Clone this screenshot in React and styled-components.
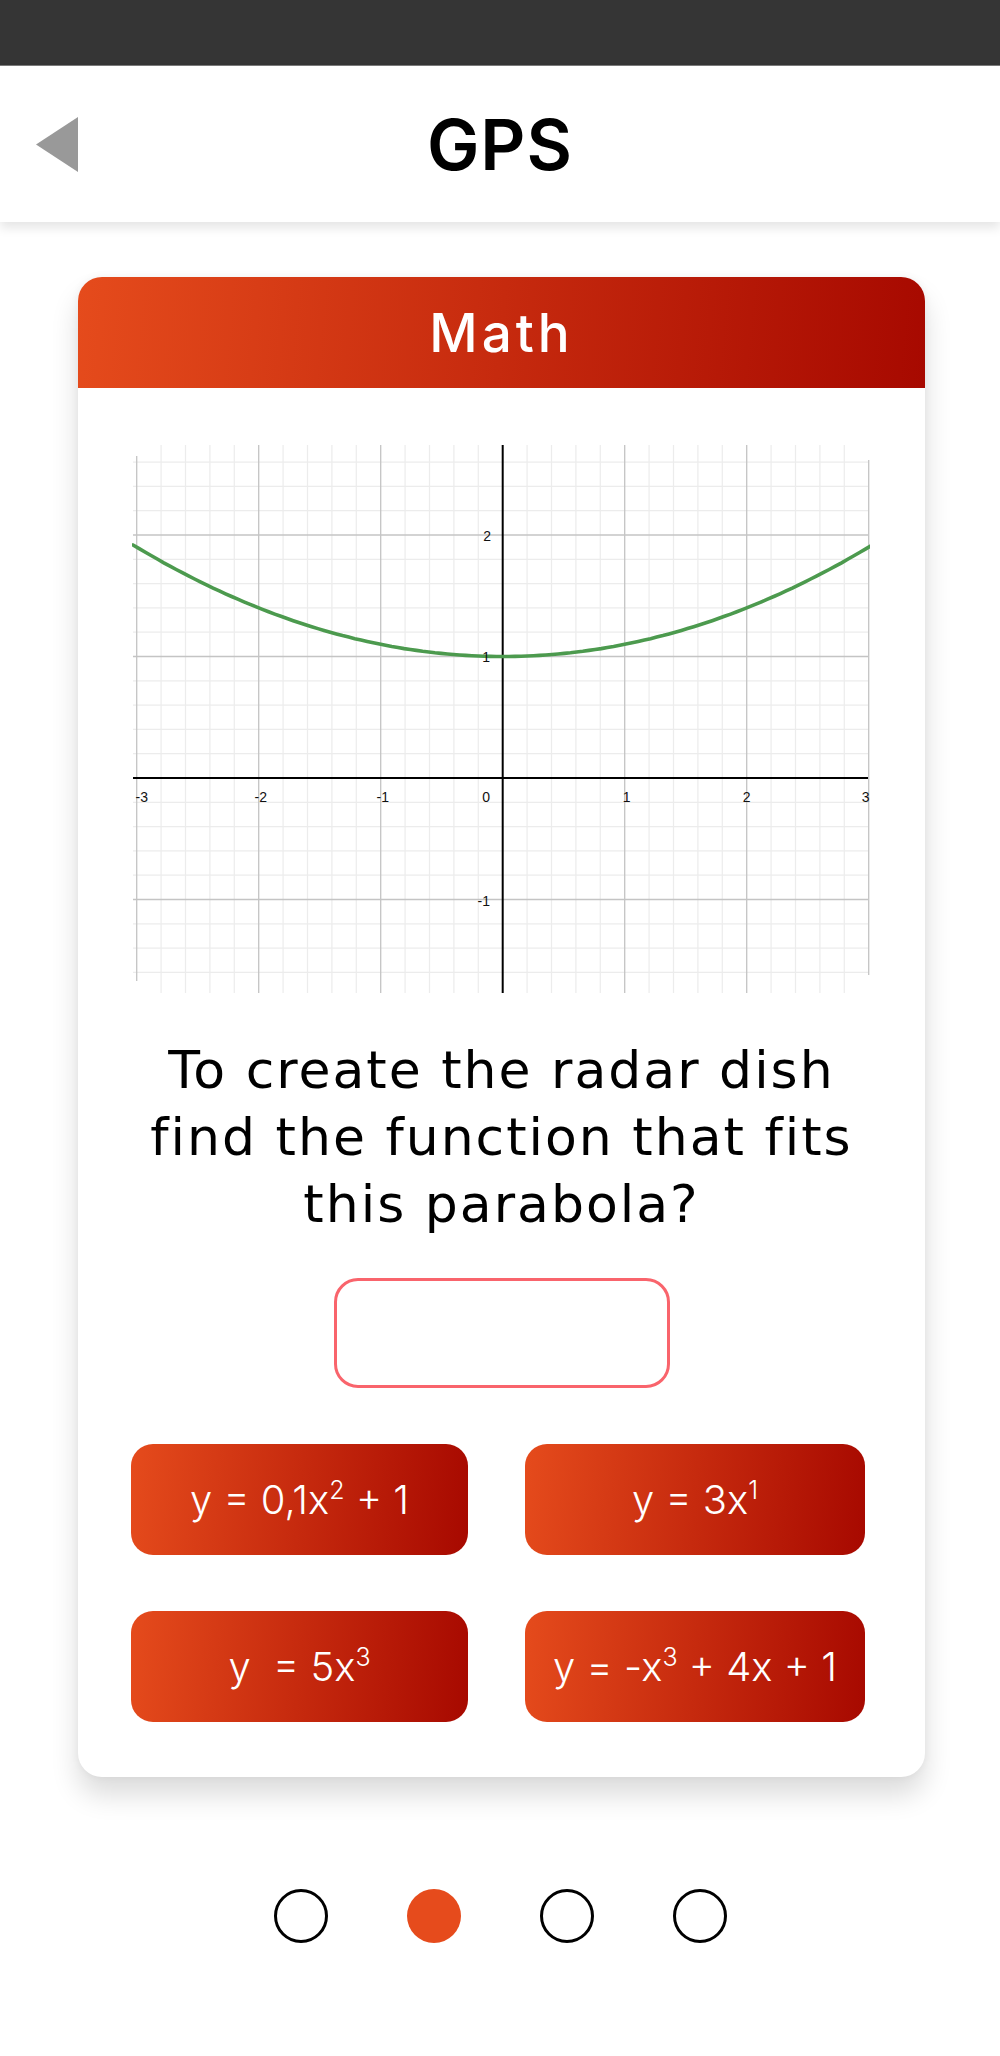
import React from "react";
import styled, { createGlobalStyle } from "styled-components";

const GlobalStyle = createGlobalStyle`
  body {
    margin: 0;
    background: #ffffff;
    font-family: "Inter", "DejaVu Sans", sans-serif;
  }
`;

const Page = styled.div`
  width: 1000px;
  min-height: 2056px;
  background: #ffffff;
`;

const StatusBar = styled.div`
  height: 65px;
  background: #353535;
  border-bottom: 1px solid #7a7a7a;
`;

const Header = styled.header`
  display: grid;
  grid-template-columns: 1fr auto 1fr;
  align-items: center;
  height: 156px;
  background: #ffffff;
  box-shadow: 0 6px 10px rgba(0, 0, 0, 0.1);
  position: relative;
`;

const BackButton = styled.button`
  justify-self: start;
  display: flex;
  align-items: center;
  margin-left: 36px;
  padding: 0;
  border: none;
  background: none;
  cursor: pointer;
`;

const Title = styled.h1`
  margin: 0;
  font-size: 70px;
  font-weight: 600;
  color: #000;
  letter-spacing: 1px;
`;

const Card = styled.section`
  width: 847px;
  margin: 55px 0 0 78px;
  background: #ffffff;
  border-radius: 24px;
  overflow: hidden;
  box-shadow: 0 18px 28px rgba(0, 0, 0, 0.14), 0 0 8px rgba(0, 0, 0, 0.05);
  padding-bottom: 55px;
`;

const gradient = "linear-gradient(95deg, #e54b1c 0%, #a70900 100%)";

const CardHeader = styled.div`
  height: 111px;
  display: flex;
  align-items: center;
  justify-content: center;
  background: ${gradient};
  color: #ffffff;
  font-size: 53px;
  font-weight: 500;
  letter-spacing: 4px;
`;

const GraphBox = styled.div`
  width: 738px;
  height: 552px;
  margin: 55px 0 0 54px;
`;

const Label = styled.text`
  font-family: "Liberation Sans", Arial, sans-serif;
  font-size: 14px;
  fill: #111;
`;

const Question = styled.p`
  margin: 42px 0 0;
  text-align: center;
  font-family: "DejaVu Sans", "Inter", sans-serif;
  font-size: 52px;
  line-height: 67px;
  letter-spacing: 2px;
  font-weight: 400;
  color: #000;
`;

const Answer = styled.input`
  display: block;
  box-sizing: border-box;
  width: 336px;
  height: 110px;
  margin: 40px auto 0;
  border: 3px solid #f9646c;
  border-radius: 24px;
  outline: none;
  background: #fff;
  font-size: 36px;
  text-align: center;
`;

const Choices = styled.div`
  display: grid;
  grid-template-columns: 337px 340px;
  column-gap: 57px;
  row-gap: 56px;
  margin: 56px 0 0 53px;
`;

const Choice = styled.button`
  height: 111px;
  border: none;
  border-radius: 22px;
  background: ${gradient};
  color: #ffffff;
  font-family: "Inter", "DejaVu Sans", sans-serif;
  font-size: 40px;
  font-weight: 300;
  white-space: pre;
  cursor: pointer;
`;

const Sup = styled.span`
  display: inline-block;
  font-size: 25px;
  vertical-align: 15px;
  line-height: 1;
`;

const Dots = styled.div`
  display: flex;
  justify-content: center;
  gap: 79px;
  margin-top: 112px;
`;

const Dot = styled.span`
  box-sizing: border-box;
  width: 54px;
  height: 54px;
  border-radius: 50%;
  border: ${(p) => (p.$active ? "none" : "3px solid #000")};
  background: ${(p) => (p.$active ? "#e64b1c" : "#fff")};
`;

// graph in page coordinates: origin at (502.7, 778), one unit ~ 122px
const OX = 502.7;
const OY = 778;
const UX = 122;
const UY = 121.5;
const sx = (v) => OX + v * UX;
const sy = (v) => OY - v * UY;

const Graph = () => {
  const minorX = [];
  for (let i = -15; i <= 15; i++) if (i % 5 !== 0) minorX.push(sx(i / 5));
  const minorY = [];
  for (let i = -9; i <= 13; i++) if (i % 5 !== 0) minorY.push(sy(i / 5));
  const majorX = [-2, -1, 1, 2];
  const majorY = [2, 1, -1];
  const pts = [];
  for (let i = 0; i <= 120; i++) {
    const x = -3.03 + (6.06 * i) / 120;
    pts.push(`${sx(x).toFixed(1)},${sy(0.1 * x * x + 1).toFixed(1)}`);
  }
  return (
    <svg width="738" height="552" viewBox="132 443 738 552">
      {minorX.map((x) => (
        <line key={"mx" + x} x1={x} y1={445} x2={x} y2={993} stroke="#ececec" strokeWidth="1.2" />
      ))}
      {minorY.map((y) => (
        <line key={"my" + y} x1={133} y1={y} x2={868} y2={y} stroke="#ececec" strokeWidth="1.2" />
      ))}
      {majorX.map((v) => (
        <line key={"MX" + v} x1={sx(v)} y1={445} x2={sx(v)} y2={993} stroke="#c4c4c4" strokeWidth="1.3" />
      ))}
      {majorY.map((v) => (
        <line key={"MY" + v} x1={133} y1={sy(v)} x2={868} y2={sy(v)} stroke="#c4c4c4" strokeWidth="1.3" />
      ))}
      <line x1={sx(-3)} y1={456} x2={sx(-3)} y2={981} stroke="#c4c4c4" strokeWidth="1.3" />
      <line x1={sx(3)} y1={460} x2={sx(3)} y2={975} stroke="#c4c4c4" strokeWidth="1.3" />
      <line x1={133} y1={OY} x2={868} y2={OY} stroke="#000" strokeWidth="2" />
      <line x1={OX} y1={445} x2={OX} y2={993} stroke="#000" strokeWidth="2" />
      <polyline points={pts.join(" ")} fill="none" stroke="#4c9a4e" strokeWidth="3.6" strokeLinecap="round" />
      <Label x={sx(-3) + 5} y={802} textAnchor="middle">-3</Label>
      <Label x={sx(-2) + 2} y={802} textAnchor="middle">-2</Label>
      <Label x={sx(-1) + 2} y={802} textAnchor="middle">-1</Label>
      <Label x={sx(1) + 2} y={802} textAnchor="middle">1</Label>
      <Label x={sx(2)} y={802} textAnchor="middle">2</Label>
      <Label x={sx(3) - 3} y={802} textAnchor="middle">3</Label>
      <Label x={490} y={802} textAnchor="end">0</Label>
      <Label x={491} y={541} textAnchor="end">2</Label>
      <Label x={490} y={662} textAnchor="end">1</Label>
      <Label x={490} y={906} textAnchor="end">-1</Label>
    </svg>
  );
};

const App = () => {
  return (
    <Page>
      <GlobalStyle />
      <StatusBar />
      <Header>
        <BackButton aria-label="Back">
          <svg width="42" height="55" viewBox="0 0 42 55">
            <polygon points="42,0 42,55 0,27.5" fill="#999999" />
          </svg>
        </BackButton>
        <Title>GPS</Title>
        <span />
      </Header>
      <Card>
        <CardHeader>Math</CardHeader>
        <GraphBox>
          <Graph />
        </GraphBox>
        <Question>
          To create the radar dish
          <br />
          find the function that fits
          <br />
          this parabola?
        </Question>
        <Answer type="text" />
        <Choices>
          <Choice>
            y = 0,1x<Sup>2</Sup> + 1
          </Choice>
          <Choice>
            y = 3x<Sup>1</Sup>
          </Choice>
          <Choice>
            {"y  = 5x"}
            <Sup>3</Sup>
          </Choice>
          <Choice>
            y = -x<Sup>3</Sup> + 4x + 1
          </Choice>
        </Choices>
      </Card>
      <Dots>
        <Dot />
        <Dot $active />
        <Dot />
        <Dot />
      </Dots>
    </Page>
  );
};

export default App;
